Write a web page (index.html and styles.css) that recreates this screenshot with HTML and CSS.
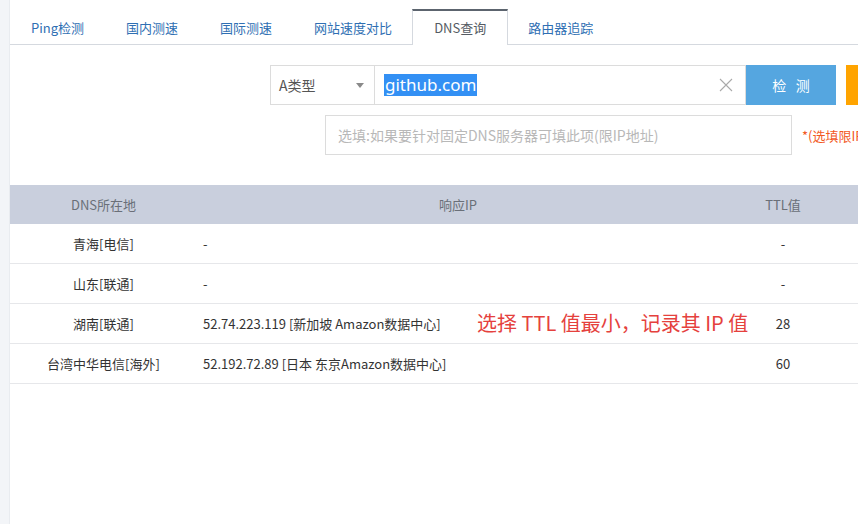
FILE: index.html
```html
<!DOCTYPE html>
<html lang="zh-CN">
<head>
<meta charset="utf-8">
<title>DNS查询</title>
<link rel="stylesheet" href="styles.css">
</head>
<body>
<div class="page">
  <aside class="strip"></aside>
  <main class="content">
    <nav class="tabs">
      <a class="tab">Ping检测</a>
      <a class="tab">国内测速</a>
      <a class="tab">国际测速</a>
      <a class="tab">网站速度对比</a>
      <a class="tab active">DNS查询</a>
      <a class="tab">路由器追踪</a>
    </nav>
    <section class="search">
      <div class="row1">
        <div class="select"><span>A类型</span><span class="caret"></span></div>
        <div class="input main-input">
          <span class="sel-text">github.com</span>
          <svg class="clear" width="14" height="14" viewBox="0 0 14 14"><path d="M1 1L13 13M13 1L1 13" stroke="#aaa" stroke-width="1.1" fill="none"/></svg>
        </div>
        <button class="btn-check">检&nbsp;&nbsp;&nbsp;测</button>
        <button class="btn-orange"></button>
      </div>
      <div class="row2">
        <div class="input dns-input">选填:如果要针对固定DNS服务器可填此项(限IP地址)</div>
        <span class="note">*(选填限IP地址)</span>
      </div>
    </section>
    <div class="table">
      <div class="thead">
        <div class="c1">DNS所在地</div>
        <div class="c2 center">响应IP</div>
        <div class="c3">TTL值</div>
      </div>
      <div class="tr">
        <div class="c1">青海[电信]</div>
        <div class="c2">-</div>
        <div class="c3">-</div>
      </div>
      <div class="tr">
        <div class="c1">山东[联通]</div>
        <div class="c2">-</div>
        <div class="c3">-</div>
      </div>
      <div class="tr">
        <div class="c1">湖南[联通]</div>
        <div class="c2">52.74.223.119 [新加坡 Amazon数据中心]</div>
        <div class="c3">28</div>
        <span class="annot">选择 TTL 值最小，记录其 IP 值</span>
      </div>
      <div class="tr">
        <div class="c1">台湾中华电信[海外]</div>
        <div class="c2">52.192.72.89 [日本 东京Amazon数据中心]</div>
        <div class="c3">60</div>
      </div>
    </div>
  </main>
</div>
</body>
</html>
```

FILE: styles.css
```css
html, body {
  margin: 0;
  padding: 0;
  background: #fff;
  overflow: hidden;
  font-family: "Noto Sans CJK SC", "Microsoft YaHei", sans-serif;
}

.page {
  display: flex;
  width: 858px;
  height: 524px;
}

.strip {
  width: 9px;
  flex: none;
  background: #f3f5f8;
  border-right: 1px solid #e9ecf0;
}

.content {
  flex: 1;
  min-width: 0;
  overflow: hidden;
}

.tabs {
  display: flex;
  padding-top: 9px;
  border-bottom: 1px solid #d5d9df;
  height: 35px;
}

.tab {
  display: block;
  padding: 0 21px;
  height: 35px;
  line-height: 37px;
  font-size: 13px;
  color: #2f6fb3;
  white-space: nowrap;
  box-sizing: border-box;
}

.tab.active {
  color: #555b63;
  background: #fff;
  border: 1px solid #d5d9df;
  border-top: 2px solid #5c646e;
  border-bottom: none;
  height: 36px;
  line-height: 34px;
  padding: 0 21px 0 21px;
  margin-left: -1px;
  margin-right: -1px;
}

.search {
  padding-top: 20px;
}

.row1 {
  display: flex;
  margin-left: 260px;
  height: 40px;
}

.select {
  width: 105px;
  height: 40px;
  box-sizing: border-box;
  border: 1px solid #dcdcdc;
  display: flex;
  align-items: center;
  justify-content: space-between;
  padding: 0 10px 0 8px;
  font-size: 14px;
  color: #555;
  flex: none;
}

.caret {
  width: 0;
  height: 0;
  border-left: 4px solid transparent;
  border-right: 4px solid transparent;
  border-top: 5px solid #8a8a8a;
}

.input {
  height: 40px;
  box-sizing: border-box;
  border: 1px solid #dcdcdc;
  display: flex;
  align-items: center;
  flex: none;
}

.main-input {
  width: 371px;
  border-left: none;
  padding-left: 9px;
  justify-content: space-between;
  padding-right: 12px;
}

.sel-text {
  background: #3390f4;
  color: #fff;
  font-size: 17px;
  line-height: 22px;
  padding: 0 1px;
  font-family: "Noto Sans", "Noto Sans CJK SC", sans-serif;
}

.btn-check {
  width: 90px;
  height: 40px;
  border: none;
  background: #55a6e0;
  color: #fff;
  font-size: 14px;
  font-family: inherit;
  padding: 0;
  flex: none;
}

.btn-orange {
  width: 90px;
  height: 40px;
  border: none;
  background: #ffa400;
  margin-left: 10px;
  flex: none;
  padding: 0;
}

.row2 {
  display: flex;
  align-items: center;
  margin-top: 10px;
  margin-left: 315px;
  white-space: nowrap;
}

.dns-input {
  width: 467px;
  padding-left: 12px;
  font-size: 14px;
  color: #b8b8b8;
}

.note {
  margin-left: 10px;
  font-size: 13px;
  color: #f2581e;
}

.table {
  margin-top: 30px;
  width: 860px;
  font-size: 13px;
}

.thead, .tr {
  display: grid;
  grid-template-columns: 187px 522px 128px 1fr;
  align-items: center;
}

.thead {
  height: 39px;
  background: #c9cfdd;
  color: #6a6f78;
}

.tr {
  position: relative;
  height: 39px;
  border-bottom: 1px solid #e6e7ea;
  color: #333;
}

.c1, .c3, .center {
  text-align: center;
}

.c2 {
  padding-left: 6px;
  white-space: nowrap;
}

.c2.center {
  padding-left: 0;
}

.annot {
  position: absolute;
  left: 467px;
  top: 7px;
  font-size: 20px;
  color: #e5413d;
  white-space: nowrap;
  line-height: 24px;
}
```
